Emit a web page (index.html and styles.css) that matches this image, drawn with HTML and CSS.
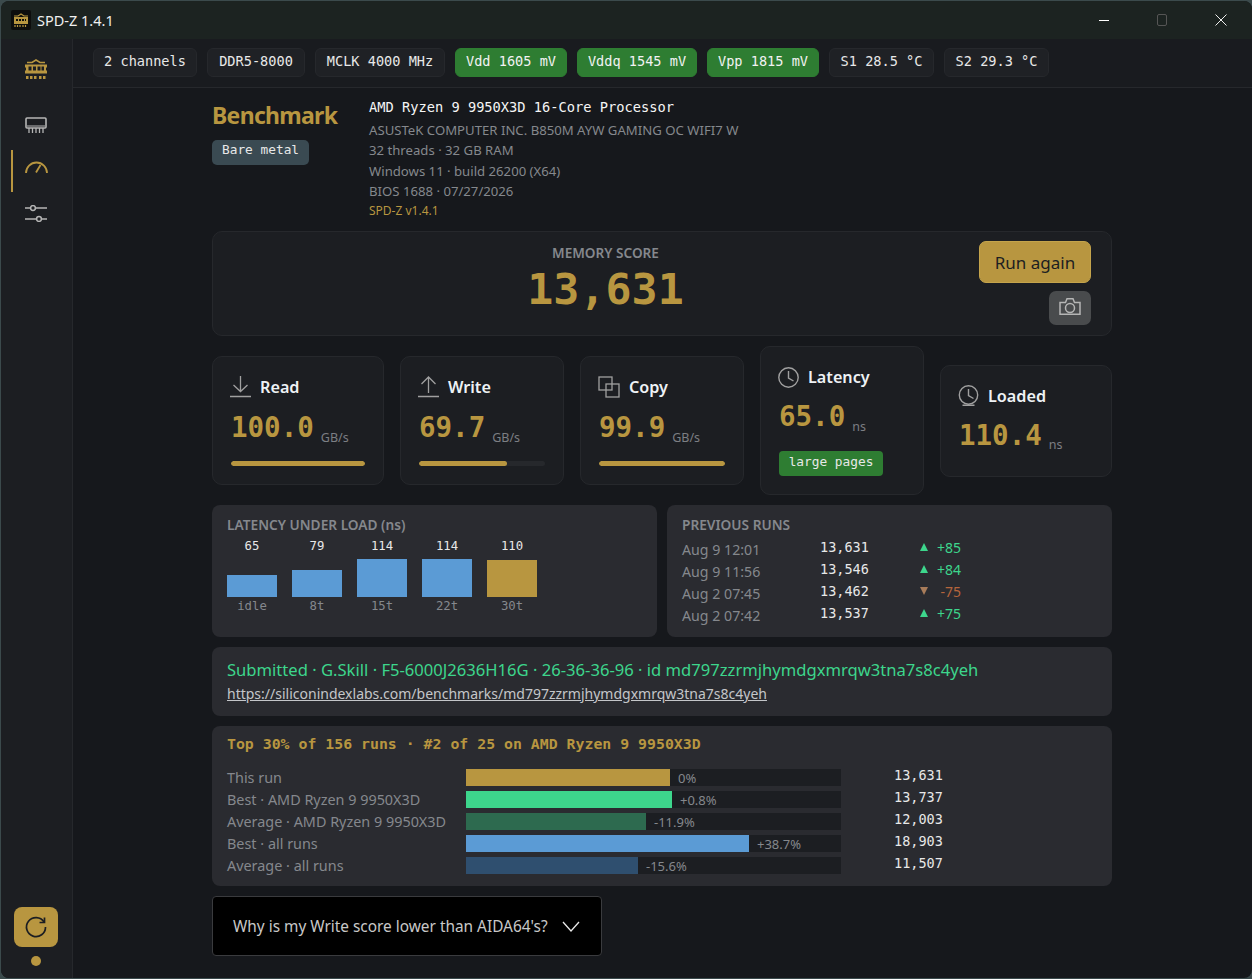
FILE: index.html
```html
<!DOCTYPE html>
<html lang="en">
<head>
    <meta charset="UTF-8">
    <meta name="viewport" content="width=device-width, initial-scale=1.0">
    <title>SPD-Z 1.4.1</title>
    <link rel="stylesheet" href="styles.css">
</head>
<body>
    <div class="window">
        <header class="titlebar">
            <svg class="app-icon" width="20" height="20" viewBox="0 0 20 20">
                <rect width="20" height="20" rx="2" fill="#0d0d0d"/>
                <path d="M3 6 H7 L10 4 L13 6 H17" fill="none" stroke="#b89640" stroke-width="1.200"/>
                <rect x="3" y="7" width="14" height="7" fill="#b89640"/>
                <path d="M5 9h2v2H5zM8 9h2v2H8zM11 9h2v2h-2zM14 9h1v2h-1z" fill="#0d0d0d"/>
                <path d="M4 15v2M6.500 15v2M9 15v2M12 15v2M14.500 15v2" stroke="#b89640" stroke-width="1.200"/>
            </svg>
            <span class="app-title">SPD-Z 1.4.1</span>
            <div class="win-controls">
                <svg width="10" height="10" viewBox="0 0 10 10"><path d="M0 5.500h10" stroke="#fff"/></svg>
                <svg width="10" height="12" viewBox="0 0 10 12"><rect x=".5" y=".5" width="9" height="11" rx="1.500" fill="none" stroke="#555"/></svg>
                <svg width="12" height="12" viewBox="0 0 12 12"><path d="M.5.500l11 11M11.500.500l-11 11" stroke="#eee"/></svg>
            </div>
        </header>

        <div class="app-body">
            <nav class="sidebar">
                <svg class="nav-logo" width="22" height="22" viewBox="0 0 22 22">
                    <path d="M2 4.500H7L11 2L15 4.500H20" fill="none" stroke="#b89640" stroke-width="1.500"/>
                    <path d="M0 6.500h22v3h-1v3h1v3H0v-3h1v-3H0z" fill="#b89640"/>
                    <path d="M3.500 8.500h3v4h-3zM8 8.500h3v4H8zM12.500 8.500h3v4h-3zM16.500 8.500h2.500v4h-2.500z" fill="#1c1e22"/>
                    <path d="M1 18h2.500v3H1zM5 18h2.500v3H5zM9 18h2.500v3H9zM14 18h2.500v3H14zM18 18h2.500v3H18z" fill="#b89640"/>
                </svg>
                <svg class="nav-icon" width="22" height="17" viewBox="0 0 22 17">
                    <rect x="1" y="1" width="20" height="10" rx="1" fill="none" stroke="#b5b5b5" stroke-width="1.600"/>
                    <path d="M2 9h18" stroke="#b5b5b5" stroke-width="1.200"/>
                    <path d="M4 11v5M7.500 11v5M11 11v5M14.500 11v5M18 11v5" stroke="#b5b5b5" stroke-width="1.300"/>
                </svg>
                <div class="nav-active">
                    <svg width="23" height="14" viewBox="0 0 23 14">
                        <path d="M1 13 A10.500 10.500 0 0 1 22 13" fill="none" stroke="#b89640" stroke-width="1.800"/>
                        <path d="M11 12.500 L15.500 5" stroke="#b89640" stroke-width="1.800"/>
                    </svg>
                </div>
                <svg class="nav-icon" width="22" height="17" viewBox="0 0 22 17">
                    <path d="M0 3h22M0 14h22" stroke="#b5b5b5" stroke-width="1.600"/>
                    <circle cx="8" cy="3" r="2.400" fill="#1c1e22" stroke="#b5b5b5" stroke-width="1.500"/>
                    <circle cx="14" cy="14" r="2.400" fill="#1c1e22" stroke="#b5b5b5" stroke-width="1.500"/>
                </svg>
                <div class="side-bottom">
                    <button class="refresh-btn">
                        <svg width="24" height="24" viewBox="0 0 24 24" fill="none" stroke="#1c1e22" stroke-width="1.700">
                            <path d="M20 7 A9.500 9.500 0 1 0 21.500 12"/>
                            <path d="M20.500 2.500V7.500H15.500"/>
                        </svg>
                    </button>
                    <span class="status-dot"></span>
                </div>
            </nav>

            <div class="content">
                <div class="chip-bar">
                    <span class="chip">2 channels</span>
                    <span class="chip">DDR5-8000</span>
                    <span class="chip">MCLK 4000 MHz</span>
                    <span class="chip chip-ok">Vdd 1605 mV</span>
                    <span class="chip chip-ok">Vddq 1545 mV</span>
                    <span class="chip chip-ok">Vpp 1815 mV</span>
                    <span class="chip">S1 28.5 °C</span>
                    <span class="chip">S2 29.3 °C</span>
                </div>

                <main class="page">
                    <section class="bench-head">
                        <div class="bench-title">
                            <h1>Benchmark</h1>
                            <span class="env-badge">Bare metal</span>
                        </div>
                        <div class="sys-info">
                            <div class="sys-cpu">AMD Ryzen 9 9950X3D 16-Core Processor</div>
                            <div>ASUSTeK COMPUTER INC. B850M AYW GAMING OC WIFI7 W</div>
                            <div>32 threads · 32 GB RAM</div>
                            <div>Windows 11 · build 26200 (X64)</div>
                            <div>BIOS 1688 · 07/27/2026</div>
                            <div class="sys-ver">SPD-Z v1.4.1</div>
                        </div>
                    </section>

                    <section class="score-card">
                        <div class="score-mid">
                            <div class="score-label">MEMORY SCORE</div>
                            <div class="score-value">13,631</div>
                        </div>
                        <div class="score-actions">
                            <button class="run-btn">Run again</button>
                            <button class="cam-btn">
                                <svg width="22" height="17" viewBox="0 0 22 17" fill="none" stroke="#b5b5b5" stroke-width="1.500">
                                    <path d="M1 4.500h5.500l1.500-3.700h6l1.500 3.700H21v11.700H1z"/>
                                    <circle cx="11" cy="10" r="4.500"/>
                                </svg>
                            </button>
                        </div>
                    </section>

                    <section class="metrics">
                        <div class="metric metric-bar">
                            <div class="metric-head">
                                <svg width="21" height="22" viewBox="0 0 21 22" fill="none" stroke="#a0a0a0" stroke-width="1.300"><path d="M10.500 0v15.500M3.500 9l7 6.500 7-6.500M0 20.500h21"/></svg>
                                Read
                            </div>
                            <div class="metric-val">100.0<small>GB/s</small></div>
                            <div class="meter"><div class="meter-fill" style="width:100%"></div></div>
                        </div>
                        <div class="metric metric-bar">
                            <div class="metric-head">
                                <svg width="21" height="22" viewBox="0 0 21 22" fill="none" stroke="#a0a0a0" stroke-width="1.300"><path d="M10.500 17V1M3.500 8l7-7 7 7M0 20.500h21"/></svg>
                                Write
                            </div>
                            <div class="metric-val">69.7<small>GB/s</small></div>
                            <div class="meter"><div class="meter-fill" style="width:70%"></div></div>
                        </div>
                        <div class="metric metric-bar">
                            <div class="metric-head">
                                <svg width="22" height="22" viewBox="0 0 22 22" fill="none" stroke="#a0a0a0" stroke-width="1.300"><rect x="1" y="1" width="13" height="13"/><rect x="8" y="8" width="13" height="13"/></svg>
                                Copy
                            </div>
                            <div class="metric-val">99.9<small>GB/s</small></div>
                            <div class="meter"><div class="meter-fill" style="width:100%"></div></div>
                        </div>
                        <div class="metric">
                            <div class="metric-head">
                                <svg width="21" height="21" viewBox="0 0 21 21" fill="none" stroke="#a0a0a0" stroke-width="1.400"><circle cx="10.500" cy="10.500" r="9.700"/><path d="M10.500 4v7l5 3"/></svg>
                                Latency
                            </div>
                            <div class="metric-val">65.0<small>ns</small></div>
                            <span class="tag-ok">large pages</span>
                        </div>
                        <div class="metric metric-short">
                            <div class="metric-head">
                                <svg width="21" height="21" viewBox="0 0 21 21" fill="none" stroke="#a0a0a0" stroke-width="1.400"><circle cx="10.500" cy="10" r="9.200"/><path d="M10.500 4v6.500l5 3M4.500 20.300h12"/></svg>
                                Loaded
                            </div>
                            <div class="metric-val">110.4<small>ns</small></div>
                        </div>
                    </section>

                    <section class="two-col">
                        <div class="panel">
                            <div class="panel-title">LATENCY UNDER LOAD (ns)</div>
                            <div class="lat-bars">
                                <div class="lat-col"><span class="lat-num">65</span><div class="lat-bar" style="height:22px"></div><span class="lat-name">idle</span></div>
                                <div class="lat-col"><span class="lat-num">79</span><div class="lat-bar" style="height:27px"></div><span class="lat-name">8t</span></div>
                                <div class="lat-col"><span class="lat-num">114</span><div class="lat-bar" style="height:38px"></div><span class="lat-name">15t</span></div>
                                <div class="lat-col"><span class="lat-num">114</span><div class="lat-bar" style="height:38px"></div><span class="lat-name">22t</span></div>
                                <div class="lat-col"><span class="lat-num">110</span><div class="lat-bar lat-last" style="height:37px"></div><span class="lat-name">30t</span></div>
                            </div>
                        </div>
                        <div class="panel">
                            <div class="panel-title">PREVIOUS RUNS</div>
                            <div class="runs">
                                <div class="run"><span class="run-date">Aug 9 12:01</span><span class="run-score">13,631</span><span class="run-delta up"><i class="tri-up"></i><b>+85</b></span></div>
                                <div class="run"><span class="run-date">Aug 9 11:56</span><span class="run-score">13,546</span><span class="run-delta up"><i class="tri-up"></i><b>+84</b></span></div>
                                <div class="run"><span class="run-date">Aug 2 07:45</span><span class="run-score">13,462</span><span class="run-delta down"><i class="tri-down"></i><b>-75</b></span></div>
                                <div class="run"><span class="run-date">Aug 2 07:42</span><span class="run-score">13,537</span><span class="run-delta up"><i class="tri-up"></i><b>+75</b></span></div>
                            </div>
                        </div>
                    </section>

                    <section class="panel submit-panel">
                        <div class="submit-line">Submitted · G.Skill · F5-6000J2636H16G · 26-36-36-96 · id md797zzrmjhymdgxmrqw3tna7s8c4yeh</div>
                        <a class="submit-link" href="#">https://siliconindexlabs.com/benchmarks/md797zzrmjhymdgxmrqw3tna7s8c4yeh</a>
                    </section>

                    <section class="panel rank-panel">
                        <div class="rank-title">Top 30% of 156 runs · #2 of 25 on AMD Ryzen 9 9950X3D</div>
                        <div class="rank-rows">
                            <div class="rank-row"><span class="rank-name">This run</span><div class="rank-track"><div class="rank-fill gold" style="width:204px"></div><span class="rank-pct">0%</span></div><span class="rank-val">13,631</span></div>
                            <div class="rank-row"><span class="rank-name">Best · AMD Ryzen 9 9950X3D</span><div class="rank-track"><div class="rank-fill green" style="width:206px"></div><span class="rank-pct">+0.8%</span></div><span class="rank-val">13,737</span></div>
                            <div class="rank-row"><span class="rank-name">Average · AMD Ryzen 9 9950X3D</span><div class="rank-track"><div class="rank-fill green-dim" style="width:180px"></div><span class="rank-pct">-11.9%</span></div><span class="rank-val">12,003</span></div>
                            <div class="rank-row"><span class="rank-name">Best · all runs</span><div class="rank-track"><div class="rank-fill blue" style="width:283px"></div><span class="rank-pct">+38.7%</span></div><span class="rank-val">18,903</span></div>
                            <div class="rank-row"><span class="rank-name">Average · all runs</span><div class="rank-track"><div class="rank-fill blue-dim" style="width:172px"></div><span class="rank-pct">-15.6%</span></div><span class="rank-val">11,507</span></div>
                        </div>
                    </section>

                    <div class="faq">
                        <span>Why is my Write score lower than AIDA64's?</span>
                        <svg width="18" height="11" viewBox="0 0 18 11" fill="none" stroke="#e8e8e8" stroke-width="1.300"><path d="M1 1l8 9 8-9"/></svg>
                    </div>
                </main>
            </div>
        </div>
    </div>
</body>
</html>
```

FILE: styles.css
```css
* {
    box-sizing: border-box;
}
html, body {
    margin: 0;
    height: 100%;
}
body {
    background: #3b4a4c;
    padding: 1px 0 1px 1px;
    font-family: "Noto Sans", sans-serif;
    color: #e8e8e8;
    overflow: hidden;
}
.window {
    height: 100%;
    display: flex;
    flex-direction: column;
    background: #16181c;
    border-radius: 8px;
    overflow: hidden;
}
.titlebar {
    height: 38px;
    flex: none;
    display: flex;
    align-items: center;
    padding-left: 10px;
    background: #1c2321;
}
.app-title {
    margin-left: 6px;
    font-size: 14.500px;
    color: #f0f0f0;
}
.win-controls {
    margin-left: auto;
    display: flex;
    align-items: center;
    gap: 48px;
    padding-right: 25px;
}
.app-body {
    flex: 1;
    display: flex;
    min-height: 0;
}

/* sidebar */
.sidebar {
    width: 72px;
    flex: none;
    display: flex;
    flex-direction: column;
    align-items: center;
    padding: 19px 1px 0 0;
    background: #1c1e22;
    border-right: 1px solid #26282c;
}
.nav-logo {
    margin-bottom: 37px;
}
.nav-icon {
    display: block;
}
.nav-active {
    position: relative;
    height: 14px;
    margin: 26px 0 31px;
}
.nav-active svg {
    display: block;
}
.nav-active::before {
    content: "";
    position: absolute;
    left: -14px;
    top: -10px;
    width: 2px;
    height: 42px;
    background: #b89640;
}
.side-bottom {
    margin-top: auto;
    display: flex;
    flex-direction: column;
    align-items: center;
    gap: 9px;
    padding-bottom: 12px;
}
.refresh-btn {
    width: 44px;
    height: 40px;
    display: flex;
    align-items: center;
    justify-content: center;
    padding: 0;
    background: #b89640;
    border: none;
    border-radius: 8px;
}
.status-dot {
    width: 10px;
    height: 10px;
    border-radius: 50%;
    background: #b89640;
}

/* top chips */
.content {
    flex: 1;
    min-width: 0;
    display: flex;
    flex-direction: column;
}
.chip-bar {
    height: 49px;
    flex: none;
    display: grid;
    grid-template-columns: 104px 98px 130px 112px 120px 112px 105px 105px;
    gap: 10px;
    padding: 9px 20px 0;
    border-bottom: 1px solid #26282c;
    background: #191b1f;
}
.chip {
    height: 29px;
    padding-bottom: 4px;
    display: flex;
    align-items: center;
    justify-content: center;
    font-family: "DejaVu Sans Mono", monospace;
    font-size: 13.600px;
    white-space: nowrap;
    background: #1f2125;
    border: 1px solid #26282c;
    border-radius: 6px;
}
.chip-ok {
    background: #2e7d32;
    border-color: #2e7d32;
    color: #f2f2f2;
}

/* page column */
.page {
    width: 900px;
    margin-left: 139px;
    padding-top: 9px;
}
.bench-head {
    display: flex;
    height: 134px;
}
.bench-title {
    width: 157px;
}
h1 {
    margin: 2px 0 6px;
    font-size: 23px;
    line-height: 32px;
    font-weight: 700;
    letter-spacing: -0.7px;
    color: #b89640;
}
.env-badge {
    display: inline-block;
    height: 25px;
    padding: 0 10px;
    font-family: "DejaVu Sans Mono", monospace;
    font-size: 12.800px;
    line-height: 20px;
    background: #3a4a52;
    border-radius: 5px;
}
.sys-info {
    font-size: 13.170px;
    line-height: 20.500px;
    color: #85888d;
}
.sys-cpu {
    font-family: "DejaVu Sans Mono", monospace;
    font-size: 13.700px;
    color: #f5f5f5;
    margin-bottom: 2px;
}
.sys-ver {
    font-size: 12px;
    color: #b89640;
    line-height: 18px;
}

/* score */
.score-card {
    position: relative;
    height: 105px;
    background: #1c1e22;
    border: 1px solid #26282c;
    border-radius: 10px;
    padding: 11px 0 0;
}
.score-mid {
    width: 785px;
    text-align: center;
}
.score-label {
    font-size: 13.600px;
    font-weight: 600;
    line-height: 20px;
    color: #85888d;
}
.score-value {
    font-family: "DejaVu Sans Mono", monospace;
    font-size: 43.300px;
    font-weight: 700;
    line-height: 52px;
    color: #b89640;
}
.score-actions {
    position: absolute;
    top: 9px;
    right: 20px;
    display: flex;
    flex-direction: column;
    align-items: flex-end;
    gap: 8px;
}
.run-btn {
    width: 112px;
    height: 42px;
    padding: 0;
    font-family: "Noto Sans", sans-serif;
    font-size: 17px;
    color: #1c1e22;
    background: #b89640;
    border: 1px solid #c4a44c;
    border-radius: 7px;
}
.cam-btn {
    width: 42px;
    height: 34px;
    display: flex;
    align-items: center;
    justify-content: center;
    padding: 0 0 3px;
    background: #494b4d;
    border: none;
    border-radius: 7px;
}

/* metric cards */
.metrics {
    display: grid;
    grid-template-columns: 172px 164px 164px 164px 172px;
    gap: 16px;
    align-items: center;
    height: 149px;
    margin-top: 10px;
}
.metric {
    padding: 19px 18px 18px;
    background: #1c1e22;
    border: 1px solid #26282c;
    border-radius: 10px;
}
.metric-short {
    padding-bottom: 23px;
}
.metric-head {
    display: flex;
    align-items: center;
    gap: 9px;
    height: 24px;
    margin-left: -1px;
    padding-bottom: 2px;
    font-size: 16.200px;
    font-weight: 600;
    color: #eef2f5;
}
.metric-val {
    margin-top: 8px;
    font-family: "DejaVu Sans Mono", monospace;
    font-size: 27.500px;
    font-weight: 700;
    line-height: 36px;
    color: #b89640;
    white-space: nowrap;
}
.metric-bar .metric-val {
    margin-top: 9px;
}
.metric-val small {
    margin-left: 7px;
    font-family: "Noto Sans", sans-serif;
    font-size: 12.500px;
    font-weight: 400;
    line-height: 0;
    vertical-align: -4.500px;
    color: #7c7f84;
}
.meter {
    height: 5px;
    margin-top: 16px;
    background: #26282c;
    border-radius: 3px;
    overflow: hidden;
}
.meter-fill {
    height: 100%;
    background: #b89640;
    border-radius: 3px;
}
.tag-ok {
    display: block;
    width: 104px;
    height: 25px;
    margin-top: 17px;
    font-family: "DejaVu Sans Mono", monospace;
    font-size: 12.800px;
    line-height: 21px;
    text-align: center;
    background: #2e7d32;
    border-radius: 4px;
}

/* panels */
.panel {
    background: #2a2b30;
    border-radius: 8px;
}
.two-col {
    display: grid;
    grid-template-columns: 1fr 1fr;
    gap: 10px;
    margin-top: 10px;
}
.two-col .panel {
    height: 132px;
    padding: 10px 15px;
}
.panel-title {
    font-size: 13.700px;
    font-weight: 600;
    line-height: 20px;
    color: #85888d;
}
.lat-bars {
    display: flex;
    gap: 15px;
}
.lat-col {
    width: 50px;
    height: 80px;
    display: flex;
    flex-direction: column;
    align-items: center;
    font-family: "DejaVu Sans Mono", monospace;
    font-size: 12.300px;
}
.lat-num {
    line-height: 22px;
}
.lat-bar {
    width: 100%;
    margin-top: auto;
    background: #5b9bd5;
}
.lat-last {
    background: #b89640;
}
.lat-name {
    line-height: 18px;
    color: #85888d;
}
.run {
    display: grid;
    grid-template-columns: 138px 100px 1fr;
    height: 22px;
    align-items: center;
}
.run-date {
    font-size: 14.200px;
    color: #85888d;
    padding-top: 5px;
}
.run-score {
    font-family: "DejaVu Sans Mono", monospace;
    font-size: 13.500px;
    color: #e8e8e8;
}
.run-delta {
    display: flex;
    align-items: center;
    gap: 7px;
    font-size: 14px;
}
.run-delta b {
    width: 26px;
    font-weight: 400;
    text-align: right;
}
.up {
    color: #3dd68c;
}
.down {
    color: #b5653c;
}
.tri-up, .tri-down {
    width: 0;
    height: 0;
    border-left: 4.500px solid transparent;
    border-right: 4.500px solid transparent;
}
.tri-up {
    border-bottom: 8px solid #3dd68c;
}
.tri-down {
    border-top: 8px solid #a87c5a;
}

.submit-panel {
    margin-top: 10px;
    height: 69px;
    padding: 10px 15px;
}
.submit-line {
    font-size: 16.600px;
    line-height: 25px;
    color: #3dd68c;
}
.submit-link {
    display: block;
    font-size: 14px;
    line-height: 23px;
    color: #c4c6c9;
}

/* comparison */
.rank-panel {
    margin-top: 10px;
    height: 160px;
    padding: 8px 15px;
}
.rank-title {
    font-family: "DejaVu Sans Mono", monospace;
    font-size: 14.850px;
    font-weight: 700;
    line-height: 20px;
    color: #b89640;
}
.rank-rows {
    margin-top: 12px;
}
.rank-row {
    display: flex;
    align-items: center;
    height: 22px;
}
.rank-name {
    width: 239px;
    font-size: 14.400px;
    color: #85888d;
    white-space: nowrap;
}
.rank-track {
    width: 375px;
    height: 17px;
    display: flex;
    align-items: center;
    align-self: flex-start;
    margin-top: 3px;
    background: #1c1e22;
}
.rank-fill {
    height: 100%;
}
.gold { background: #b89640; }
.green { background: #3dd68c; }
.green-dim { background: #2d6a4f; }
.blue { background: #5b9bd5; }
.blue-dim { background: #2f4f6f; }
.rank-pct {
    margin-left: 8px;
    font-size: 13px;
    color: #85888d;
}
.rank-val {
    margin: -4px 0 0 53px;
    font-family: "DejaVu Sans Mono", monospace;
    font-size: 13.500px;
    color: #e8e8e8;
}

.faq {
    width: 390px;
    height: 60px;
    margin-top: 10px;
    display: flex;
    align-items: center;
    justify-content: space-between;
    padding: 0 21px 0 20px;
    font-size: 15.400px;
    color: #c8c8c8;
    background: #000;
    border: 1px solid #3a3b3e;
    border-radius: 4px;
}
```
